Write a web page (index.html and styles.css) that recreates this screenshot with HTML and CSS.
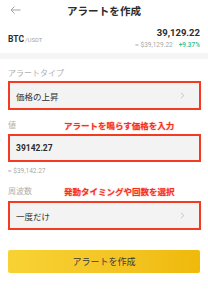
FILE: index.html
```html
<!DOCTYPE html>
<html lang="ja">
<head>
<meta charset="utf-8">
<link rel="stylesheet" href="styles.css">
</head>
<body>
<div class="page">
  <header class="topbar">
    <svg class="back" width="11" height="8" viewBox="0 0 11 8"><path d="M10.5 4H1M4.5 0.5L1 4l3.5 3.5" fill="none" stroke="#9a9a9a" stroke-width="0.9"/></svg>
    <h1 class="title">アラートを作成</h1>
  </header>
  <section class="pair">
    <div class="pair-name"><span class="base">BTC</span><span class="quote">/USDT</span></div>
    <div class="pair-price">
      <div class="price">39,129.22</div>
      <div class="sub"><span class="usd">≈ $39,129.22</span><span class="chg">+9.37%</span></div>
    </div>
  </section>
  <div class="band"></div>
  <main class="form">
    <div class="label-row first"><span class="label">アラートタイプ</span></div>
    <div class="field">
      <span class="value">価格の上昇</span>
      <svg class="chev" width="5" height="7" viewBox="0 0 5 7"><path d="M1 0.8L3.8 3.5 1 6.2" fill="none" stroke="#c4c4c4" stroke-width="1"/></svg>
    </div>
    <div class="label-row"><span class="label">値</span><span class="note">アラートを鳴らす価格を入力</span></div>
    <div class="field input"><span class="value num">39142.27</span></div>
    <div class="helper">≈ $39,142.27</div>
    <div class="label-row third"><span class="label">周波数</span><span class="note">発動タイミングや回数を選択</span></div>
    <div class="field">
      <span class="value">一度だけ</span>
      <svg class="chev" width="5" height="7" viewBox="0 0 5 7"><path d="M1 0.8L3.8 3.5 1 6.2" fill="none" stroke="#c4c4c4" stroke-width="1"/></svg>
    </div>
    <button class="submit">アラートを作成</button>
  </main>
</div>
</body>
</html>
```
FILE: styles.css
```css
* { box-sizing: border-box; margin: 0; padding: 0; }
html, body { background: #fff; }
body {
  width: 208px;
  font-family: "Noto Sans CJK JP", "Noto Sans", sans-serif;
  color: #333;
}
.page { width: 208px; height: 300px; overflow: hidden; }
.topbar {
  position: relative;
  height: 21px;
  display: flex;
  align-items: center;
  justify-content: center;
}
.back { position: absolute; left: 10px; top: 6px; }
.title { font-size: 10.5px; font-weight: 700; line-height: 21px; color: #2b2b2b; letter-spacing: 0.1px; }
.pair {
  margin-top: 5px;
  height: 24px;
  padding: 0 8px;
  display: flex;
  justify-content: space-between;
  align-items: center;
}
.pair-name { display: flex; align-items: baseline; gap: 1px; margin-top: 2px; }
.base { font-family: "Roboto", sans-serif; font-size: 8.5px; font-weight: 700; color: #2b2b2b; }
.quote { font-family: "Roboto", sans-serif; font-size: 6px; color: #a6a6a6; }
.pair-price { text-align: right; }
.price { font-family: "Roboto", sans-serif; font-size: 9.5px; font-weight: 700; line-height: 14px; color: #2b2b2b; }
.sub { font-family: "Roboto", sans-serif; font-size: 6.5px; line-height: 10px; display: flex; gap: 6px; justify-content: flex-end; }
.usd { color: #a9a9a9; }
.chg { color: #2ebd85; font-weight: 500; }
.band { margin-top: 3px; height: 6px; background: #f5f5f5; }
.form { padding: 0 8px 0 8px; display: flex; flex-direction: column; }
.label-row { position: relative; height: 12px; display: flex; align-items: center; margin-top: 9px; margin-bottom: 3px; }
.label-row.first { margin-top: 8px; margin-bottom: 2px; }
.label-row.third { margin-top: 9px; margin-bottom: 4px; }
.label { font-size: 8px; color: #b0b0b0; line-height: 12px; }
.note {
  position: absolute;
  left: 56px;
  top: 0;
  font-size: 8.5px;
  line-height: 12px;
  font-weight: 700;
  color: #f5301f;
  text-shadow: 0 0 1px #ffb3ab, 0 0 2px #ffd0cb;
  white-space: nowrap;
}
.field {
  height: 29px;
  width: 193px;
  border: 2px solid #f53a22;
  background: #f3f3f3;
  display: flex;
  align-items: center;
  justify-content: space-between;
  padding: 0 14px 0 6px;
}
.field.input { height: 28px; }
.value { font-size: 8.5px; color: #2f2f2f; }
.num { font-family: "Roboto", sans-serif; font-weight: 700; font-size: 8.5px; color: #2b2b2b; }
.chev { display: block; }
.helper { font-family: "Roboto", sans-serif; font-size: 6.5px; color: #a9a9a9; line-height: 10px; margin-top: 4px; }
.submit {
  margin-top: 20px;
  height: 23px;
  width: 192px;
  border: none;
  border-radius: 2px;
  background: linear-gradient(90deg, #f8d234 0%, #f3c423 60%, #f0b90b 100%);
  font-family: "Noto Sans CJK JP", sans-serif;
  font-size: 9px;
  color: #3a3a3a;
}
```
